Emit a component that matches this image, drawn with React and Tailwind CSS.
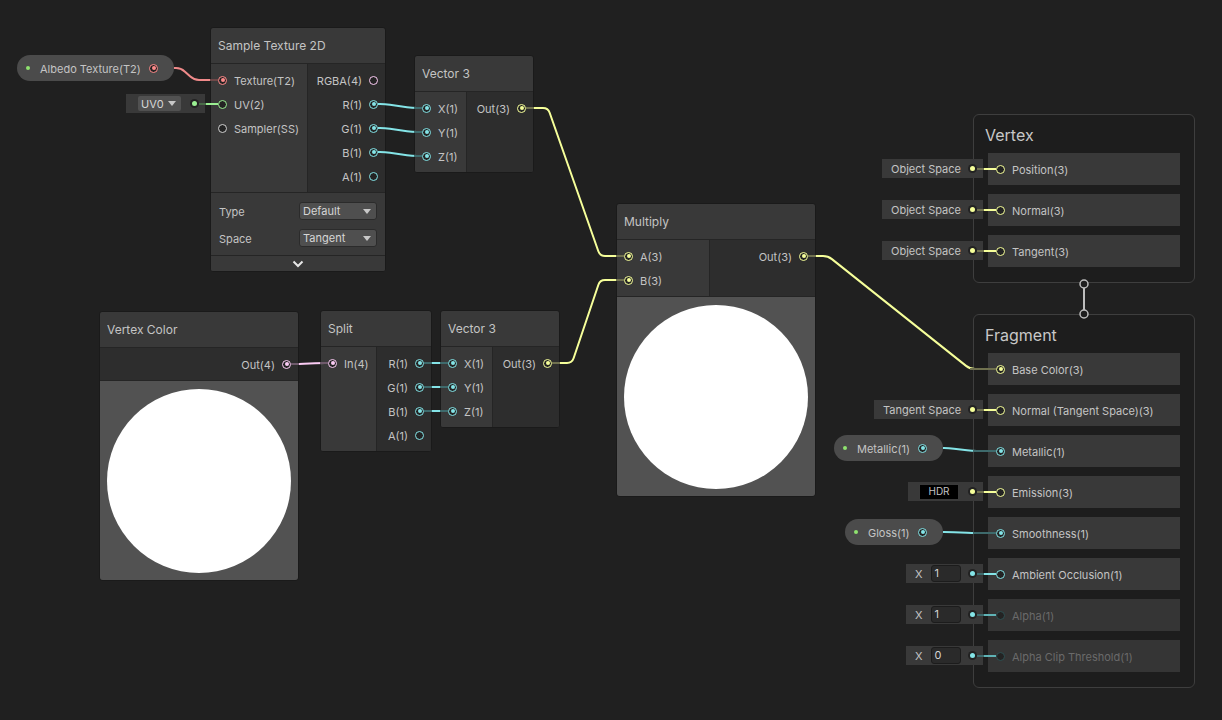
import React from 'react';

// port colours per slot type
const YE = { ring: 'border-[#f6ff9a]', dot: 'bg-[#f6ff9a]' };
const CY = { ring: 'border-[#84e4e7]', dot: 'bg-[#84e4e7]' };
const PK = { ring: 'border-[#fbcbf4]', dot: 'bg-[#fbcbf4]' };
const RD = { ring: 'border-[#ff8b8b]', dot: 'bg-[#ff8b8b]' };
const GR = { ring: 'border-[#9aef92]', dot: 'bg-[#9aef92]' };
const WH = { ring: 'border-[#d0d0d0]', dot: 'bg-[#d0d0d0]' };
const OFF = { ring: 'border-[#2e5052]', dot: 'bg-[#2e5052]' };

const Port = ({ c, on }) => (
  <span className={`flex h-[9px] w-[9px] shrink-0 items-center justify-center rounded-full border-[1.5px] bg-[#232323] ${c.ring}`}>
    {on && <span className={`h-[4px] w-[4px] rounded-full ${c.dot}`} />}
  </span>
);

const Dot = ({ c }) => (
  <span className="flex h-[9px] w-[9px] shrink-0 items-center justify-center rounded-full bg-[#222222]">
    <span className={`h-[5px] w-[5px] rounded-full ${c.dot}`} />
  </span>
);

const Caret = () => (
  <svg width="8" height="5" viewBox="0 0 8 5">
    <path d="M0 0h8L4 5z" fill="#c8c8c8" />
  </svg>
);

const Dropdown = ({ label }) => (
  <div className="flex h-[18px] w-[78px] items-center justify-between rounded-[3px] border border-[#2b2b2b] bg-[#4f4f4f] pl-[3px] pr-[5px] text-[#d6d6d6]">
    <span className="mt-[1px]">{label}</span>
    <Caret />
  </div>
);

const InRow = ({ label, c, on }) => (
  <div className="flex h-[24px] items-center gap-[7px] pl-[7px]">
    <Port c={c} on={on} />
    <span className="mt-[3px] whitespace-nowrap">{label}</span>
  </div>
);

const OutRow = ({ label, c, on }) => (
  <div className="flex h-[24px] items-center justify-end gap-[7px] pr-[7px]">
    <span className="mt-[3px] whitespace-nowrap">{label}</span>
    <Port c={c} on={on} />
  </div>
);

const Node = ({ pos, title, inW, ins = [], outs = [], children }) => (
  <div className={`absolute ${pos} overflow-hidden rounded-[3px] border border-[#1a1a1a] bg-[#393939] text-[11px] text-[#c4c4c4]`}>
    <div className="flex h-[36px] items-center border-b border-[#252525] px-[7px] text-[12px]">{title}</div>
    <div className="flex">
      {ins.length > 0 && (
        <div className={`${inW} shrink-0 border-r border-[#252525] bg-[#393939] pb-[4px] pt-[4px]`}>
          {ins.map((p) => (
            <InRow key={p[0]} label={p[0]} c={p[1]} on={p[2]} />
          ))}
        </div>
      )}
      <div className="flex-1 bg-[#2d2d2d] pb-[4px] pt-[4px]">
        {outs.map((p) => (
          <OutRow key={p[0]} label={p[0]} c={p[1]} on={p[2]} />
        ))}
      </div>
    </div>
    {children}
  </div>
);

const Preview = () => (
  <div className="flex h-[200px] justify-center rounded-b-[3px] border-t border-[#252525] bg-[#525252] pt-[8px]">
    <div className="h-[184px] w-[184px] rounded-full bg-white" />
  </div>
);

const Pill = ({ pos, label, c }) => (
  <div className={`absolute ${pos} flex h-[26px] items-center rounded-full bg-[#4b4b4b] pl-[9px] pr-[16px] text-[11px] text-[#c4c4c4]`}>
    <span className="h-[4px] w-[4px] rounded-full bg-[#8fe36f]" />
    <span className="ml-[10px] mt-[2px] whitespace-nowrap">{label}</span>
    <span className="ml-auto">
      <Port c={c} on />
    </span>
  </div>
);

const Attach = ({ w, c, children }) => (
  <div className={`absolute right-[calc(100%+5px)] top-[6px] flex h-[19px] ${w} items-center bg-[#393939] pl-[9px] pr-[6px] text-[#c4c4c4]`}>
    {children}
    <span className="ml-auto">
      <Dot c={c} />
    </span>
  </div>
);

const XField = ({ v }) => (
  <Attach w="w-[77px]" c={CY}>
    <span className="mt-[1px]">X</span>
    <span className="ml-[8px] flex h-[17px] w-[30px] items-center rounded-[3px] border border-[#1c1c1c] bg-[#2a2a2a] pl-[3px] text-[#d4d4d4]">{v}</span>
  </Attach>
);

const Slot = ({ label, c, on, off, attach }) => (
  <div className={`relative flex h-[32px] items-center gap-[7px] pl-[8px] text-[11px] ${off ? 'bg-[#353535] text-[#6a6a6a]' : 'bg-[#393939] text-[#c4c4c4]'}`}>
    <Port c={c} on={on} />
    <span className="mt-[3px] whitespace-nowrap">{label}</span>
    {attach}
  </div>
);

const Block = ({ pos, title, children }) => (
  <div className={`absolute ${pos} w-[222px] rounded-[6px] border border-[#3e3e3e] bg-[#1d1d1d] pb-[15px]`}>
    <div className="h-[38px] pl-[11px] pt-[10px] text-[16px] leading-[20px] text-[#c8c8c8]">{title}</div>
    <div className="flex flex-col gap-[9px] pl-[14px] pr-[14px]">{children}</div>
  </div>
);

// horizontal out, straight run, horizontal in - with small rounded bends
function edgePath(x1, y1, x2, y2, a, b, r = 5) {
  const ax = x1 + a;
  const bx = x2 - b;
  const dx = bx - ax;
  const dy = y2 - y1;
  const len = Math.hypot(dx, dy) || 1;
  const ux = dx / len;
  const uy = dy / len;
  const rr = Math.min(r, len / 2, a, b);
  return `M${x1} ${y1} L${ax - rr} ${y1} Q${ax} ${y1} ${ax + ux * rr} ${y1 + uy * rr} L${bx - ux * rr} ${y2 - uy * rr} Q${bx} ${y2} ${bx + rr} ${y2} L${x2} ${y2}`;
}

const DIM = { '#f6ff9a': '#70714f', '#84e4e7': '#3e6a6c', '#fbcbf4': '#6f5a6c', '#f08a8a': '#6e4848', '#9aef92': '#4a6b48' };

const wires = [
  { d: edgePath(174, 68, 218, 80, 7, 24), c: '#f08a8a', dim: [[210, 218, 80]] },
  { d: edgePath(378, 104, 422, 108, 7, 10), c: '#84e4e7', dim: [[414, 422, 108]] },
  { d: edgePath(378, 128, 422, 132, 7, 10), c: '#84e4e7', dim: [[414, 422, 132]] },
  { d: edgePath(378, 152, 422, 156, 7, 10), c: '#84e4e7', dim: [[414, 422, 156]] },
  { d: edgePath(526, 108, 624, 256, 22, 24), c: '#f6ff9a', dim: [[526, 534, 108], [616, 624, 256]] },
  { d: edgePath(552, 363, 624, 280, 20, 24), c: '#f6ff9a', dim: [[552, 560, 363], [616, 624, 280]] },
  { d: edgePath(808, 256, 996, 369, 20, 26), c: '#f6ff9a', dim: [[808, 816, 256], [970, 996, 369]] },
  { d: edgePath(291, 364, 328, 363, 8, 8), c: '#fbcbf4', dim: [[291, 299, 364], [320, 328, 363]] },
  { d: 'M424 363H448', c: '#84e4e7', dim: [[424, 432, 363], [440, 448, 363]] },
  { d: 'M424 387H448', c: '#84e4e7', dim: [[424, 432, 387], [440, 448, 387]] },
  { d: 'M424 411H448', c: '#84e4e7', dim: [[424, 432, 411], [440, 448, 411]] },
  { d: edgePath(943, 448, 996, 451, 6, 24), c: '#84e4e7', dim: [[973, 996, 451]] },
  { d: edgePath(943, 532, 996, 533, 6, 24), c: '#84e4e7', dim: [[973, 996, 533]] },
  { d: 'M199 104H218', c: '#9aef92', dim: [[199, 206, 104]] },
];

const stubs = [
  [169, '#f6ff9a'],
  [210, '#f6ff9a'],
  [251, '#f6ff9a'],
  [410, '#f6ff9a'],
  [492, '#f6ff9a'],
  [574, '#84e4e7'],
  [615, '#5fb3b6'],
  [656, '#5fb3b6'],
];

const Wires = () => (
  <svg className="pointer-events-none absolute inset-0 z-10" width="1222" height="720" fill="none">
    {wires.map((w, i) => (
      <g key={i}>
        <path d={w.d} stroke={w.c} strokeWidth="2" />
        {w.dim.map(([a, b, y], j) => (
          <path key={j} d={`M${a} ${y}H${b}`} stroke={DIM[w.c]} strokeWidth="2" />
        ))}
      </g>
    ))}
    {stubs.map(([y, c]) => (
      <g key={y}>
        <path d={`M977 ${y}H984`} stroke={c === '#f6ff9a' ? '#70714f' : '#3e6a6c'} strokeWidth="2" />
        <path d={`M984 ${y}H996`} stroke={c} strokeWidth="2" />
      </g>
    ))}
    <path d="M1084 288V310" stroke="#bdbdbd" strokeWidth="2" />
    <circle cx="1084" cy="284" r="4" stroke="#bdbdbd" strokeWidth="1.5" fill="#1e1e1e" />
    <circle cx="1084" cy="314" r="4" stroke="#bdbdbd" strokeWidth="1.5" fill="#1e1e1e" />
  </svg>
);

export default function App() {
  return (
    <div className="relative h-[720px] w-[1222px] overflow-hidden bg-[#202020] font-[Inter,sans-serif]">
      <Pill pos="left-[17px] top-[55px] w-[157px]" label="Albedo Texture(T2)" c={RD} />

      <div className="absolute left-[126px] top-[94px] flex h-[19px] w-[79px] items-center bg-[#393939] pl-[12px] pr-[6px] text-[11px] text-[#d6d6d6]">
        <div className="flex h-[15px] w-[43px] items-center justify-between rounded-[2px] bg-[#515151] pl-[3px] pr-[5px]">
          <span className="mt-[1px]">UV0</span>
          <Caret />
        </div>
        <span className="ml-auto">
          <Dot c={GR} />
        </span>
      </div>

      <Node
        pos="left-[210px] top-[27px] w-[176px]"
        title="Sample Texture 2D"
        inW="w-[97px]"
        ins={[
          ['Texture(T2)', RD, true],
          ['UV(2)', GR, false],
          ['Sampler(SS)', WH, false],
        ]}
        outs={[
          ['RGBA(4)', PK, false],
          ['R(1)', CY, true],
          ['G(1)', CY, true],
          ['B(1)', CY, true],
          ['A(1)', CY, false],
        ]}
      >
        <div className="border-t border-[#252525] bg-[#393939] px-[8px] pb-[8px] pt-[9px]">
          <div className="flex h-[18px] items-center justify-between">
            <span className="mt-[2px]">Type</span>
            <Dropdown label="Default" />
          </div>
          <div className="mt-[9px] flex h-[18px] items-center justify-between">
            <span className="mt-[2px]">Space</span>
            <Dropdown label="Tangent" />
          </div>
        </div>
        <div className="flex h-[16px] items-center justify-center border-t border-[#252525] bg-[#393939]">
          <svg width="12" height="8" viewBox="0 0 12 8">
            <path d="M1.5 1.5 6 6l4.5-4.5" stroke="#e6e6e6" strokeWidth="2" fill="none" />
          </svg>
        </div>
      </Node>

      <Node
        pos="left-[414px] top-[55px] w-[120px]"
        title="Vector 3"
        inW="w-[52px]"
        ins={[
          ['X(1)', CY, true],
          ['Y(1)', CY, true],
          ['Z(1)', CY, true],
        ]}
        outs={[['Out(3)', YE, true]]}
      />

      <Node
        pos="left-[616px] top-[203px] w-[200px]"
        title="Multiply"
        inW="w-[93px]"
        ins={[
          ['A(3)', YE, true],
          ['B(3)', YE, true],
        ]}
        outs={[['Out(3)', YE, true]]}
      >
        <Preview />
      </Node>

      <Node pos="left-[99px] top-[311px] w-[200px]" title="Vertex Color" outs={[['Out(4)', PK, true]]}>
        <Preview />
      </Node>

      <Node
        pos="left-[320px] top-[310px] w-[112px]"
        title="Split"
        inW="w-[56px]"
        ins={[['In(4)', PK, true]]}
        outs={[
          ['R(1)', CY, true],
          ['G(1)', CY, true],
          ['B(1)', CY, true],
          ['A(1)', CY, false],
        ]}
      />

      <Node
        pos="left-[440px] top-[310px] w-[120px]"
        title="Vector 3"
        inW="w-[52px]"
        ins={[
          ['X(1)', CY, true],
          ['Y(1)', CY, true],
          ['Z(1)', CY, true],
        ]}
        outs={[['Out(3)', YE, true]]}
      />

      <Block pos="left-[973px] top-[114px]" title="Vertex">
        <Slot label="Position(3)" c={YE} attach={<Attach w="w-[101px]" c={YE}><span className="mt-[1px]">Object Space</span></Attach>} />
        <Slot label="Normal(3)" c={YE} attach={<Attach w="w-[101px]" c={YE}><span className="mt-[1px]">Object Space</span></Attach>} />
        <Slot label="Tangent(3)" c={YE} attach={<Attach w="w-[101px]" c={YE}><span className="mt-[1px]">Object Space</span></Attach>} />
      </Block>

      <Block pos="left-[973px] top-[314px]" title="Fragment">
        <Slot label="Base Color(3)" c={YE} on />
        <Slot label="Normal (Tangent Space)(3)" c={YE} attach={<Attach w="w-[109px]" c={YE}><span className="mt-[1px]">Tangent Space</span></Attach>} />
        <Slot label="Metallic(1)" c={CY} on />
        <Slot
          label="Emission(3)"
          c={YE}
          attach={
            <Attach w="w-[75px]" c={YE}>
              <span className="ml-[2px] flex h-[16px] w-[40px] items-center justify-center border border-[#3a3a3a] bg-black text-[10px]">HDR</span>
            </Attach>
          }
        />
        <Slot label="Smoothness(1)" c={CY} on />
        <Slot label="Ambient Occlusion(1)" c={CY} attach={<XField v="1" />} />
        <Slot label="Alpha(1)" c={OFF} off attach={<XField v="1" />} />
        <Slot label="Alpha Clip Threshold(1)" c={OFF} off attach={<XField v="0" />} />
      </Block>

      <Pill pos="left-[834px] top-[435px] w-[109px]" label="Metallic(1)" c={CY} />
      <Pill pos="left-[845px] top-[519px] w-[98px]" label="Gloss(1)" c={CY} />

      <Wires />
    </div>
  );
}
